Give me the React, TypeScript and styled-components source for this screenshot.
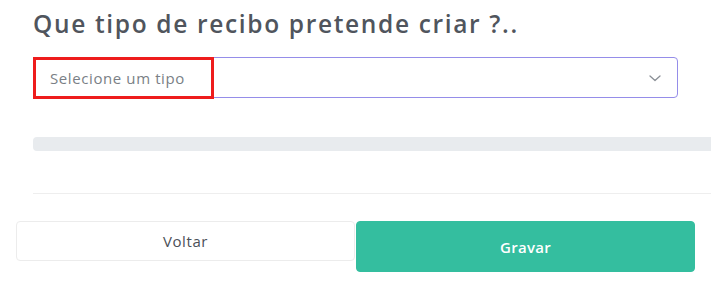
import React from 'react';
import styled, { createGlobalStyle } from 'styled-components';

const GlobalStyle = createGlobalStyle`
  html, body {
    margin: 0;
    padding: 0;
    background: #ffffff;
    font-family: 'Open Sans', 'Noto Sans', sans-serif;
  }
  * {
    box-sizing: border-box;
  }
`;

const Page = styled.div`
  width: 711px;
  height: 285px;
  overflow: hidden;
  position: relative;
`;

const Content = styled.section`
  padding: 8px 0 0 33px;
  width: 740px;
`;

const Title = styled.h2`
  margin: 0;
  font-size: 24.5px;
  font-weight: 600;
  color: #50555d;
  line-height: 31px;
  letter-spacing: 1.65px;
`;

const Field = styled.div`
  position: relative;
  margin-top: 18px;
  width: 645px;
`;

const Select = styled.div`
  display: flex;
  align-items: center;
  justify-content: space-between;
  height: 41px;
  padding: 0 15px 0 16px;
  border: 1px solid #958de9;
  border-radius: 4px;
  background: #fff;
`;

const Placeholder = styled.span`
  font-size: 15px;
  letter-spacing: 0.6px;
  color: #7a7f86;
`;

const Chevron = styled.svg`
  width: 14px;
  height: 14px;
`;

const Highlight = styled.div`
  position: absolute;
  left: 0;
  top: 0;
  width: 181px;
  height: 42px;
  border: 3px solid #ee1c1c;
  pointer-events: none;
`;

const Progress = styled.div`
  margin-top: 39px;
  height: 14px;
  background: #e8ebee;
  border-radius: 4px 0 0 4px;
`;

const Divider = styled.hr`
  margin: 42px 0 0;
  border: none;
  border-top: 1px solid #eeeeee;
`;

const Actions = styled.div`
  display: flex;
  align-items: flex-start;
  gap: 1px;
  padding: 27px 0 0 16px;
`;

interface IButton {
  primary?: boolean;
}

const Button = styled.button<IButton>`
  width: 339px;
  height: ${({ primary }): string => (primary ? '51px' : '40px')};
  border-radius: 4px;
  font-family: inherit;
  font-size: 15px;
  letter-spacing: ${({ primary }): string => (primary ? '0.3px' : '0.6px')};
  font-weight: ${({ primary }): number => (primary ? 600 : 500)};
  color: ${({ primary }): string => (primary ? '#ffffff' : '#4b5058')};
  background: ${({ primary }): string => (primary ? '#34be9f' : '#ffffff')};
  border: 1px solid ${({ primary }): string => (primary ? '#34be9f' : '#ececec')};
  cursor: pointer;
`;

const App: React.FC = () => {
  return (
    <Page>
      <GlobalStyle />
      <Content>
        <Title>Que tipo de recibo pretende criar ?..</Title>
        <Field>
          <Select>
            <Placeholder>Selecione um tipo</Placeholder>
            <Chevron viewBox="0 0 14 14" fill="none">
              <path d="M2 5l5 4.5L12 5" stroke="#8a8f96" strokeWidth="1.3" strokeLinecap="round" strokeLinejoin="round" />
            </Chevron>
          </Select>
          <Highlight />
        </Field>
        <Progress />
        <Divider />
      </Content>
      <Actions>
        <Button>Voltar</Button>
        <Button primary>Gravar</Button>
      </Actions>
    </Page>
  );
};

export default App;
